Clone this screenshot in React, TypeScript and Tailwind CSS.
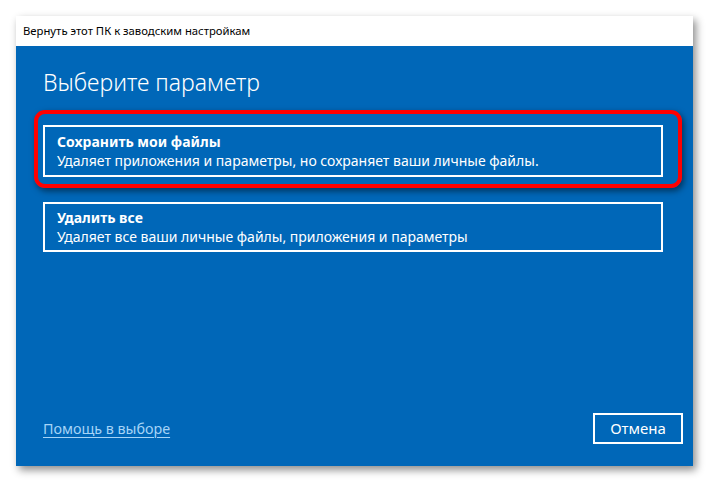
export default function App() {
  const font = { fontFamily: '"Noto Sans", "Open Sans", sans-serif' };
  return (
    <div className="w-[709px] h-[483px] bg-white pt-[16px] pl-[16px]" style={font}>
      <div className="w-[677px] h-[450px] flex flex-col shadow-[3px_4px_8px_rgba(0,0,0,0.45)]">
        <div className="h-[30px] bg-white flex items-center pl-[7px] text-[11.3px] text-black">
          Вернуть этот ПК к заводским настройкам
        </div>
        <div className="flex-1 bg-[#0067b8] flex flex-col text-white">
          <div className="pl-[27px] pr-[30px] pt-[20px] flex flex-col">
            <div className="text-[23px] leading-[32px] font-light text-white">Выберите параметр</div>
            <div className="mt-[27px] relative">
              <div className="absolute left-[-9px] top-[-15px] right-[-19px] bottom-[-11px] border-[4px] border-[#ff0000] rounded-[11px] shadow-[2px_3px_6px_rgba(0,0,0,0.5)] pointer-events-none" />
              <div className="relative border-2 border-white h-[52px] pl-[12px] flex flex-col justify-center">
                <div className="text-[14px] leading-[19px] font-bold">Сохранить мои файлы</div>
                <div className="text-[14px] leading-[19px]">Удаляет приложения и параметры, но сохраняет ваши личные файлы.</div>
              </div>
            </div>
            <div className="mt-[25px] border-2 border-white h-[50px] pl-[12px] flex flex-col justify-center">
              <div className="text-[14px] leading-[19px] font-bold">Удалить все</div>
              <div className="text-[14px] leading-[19px]">Удаляет все ваши личные файлы, приложения и параметры</div>
            </div>
          </div>
          <div className="mt-auto flex items-center justify-between pl-[27px] pr-[10px] pb-[22px]">
            <a className="text-[14.3px] text-[#a6d4f7] underline underline-offset-[3px] decoration-1">Помощь в выборе</a>
            <div className="w-[90px] h-[31px] border-2 border-white flex items-center justify-center text-[15px]">Отмена</div>
          </div>
        </div>
      </div>
    </div>
  );
}
